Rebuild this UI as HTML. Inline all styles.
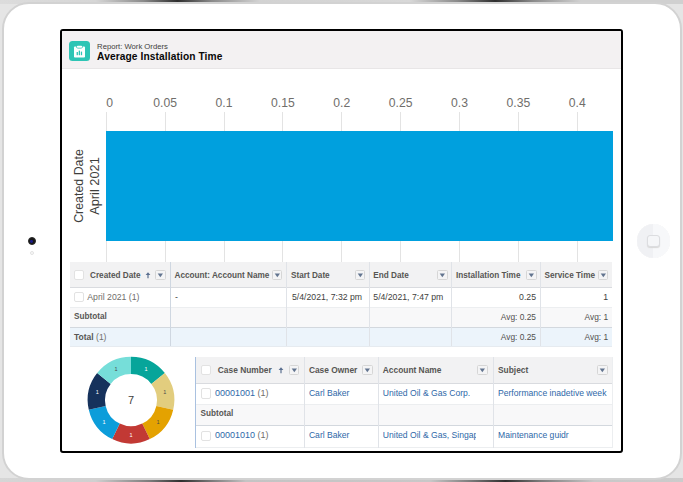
<!DOCTYPE html>
<html><head><meta charset="utf-8">
<style>
*{box-sizing:border-box;margin:0;padding:0}
html,body{width:683px;height:482px;overflow:hidden;background:#e5e5e5;font-family:"Liberation Sans",sans-serif}
.abs{position:absolute}
#topstrip{left:0;top:0;width:683px;height:4px;background:linear-gradient(90deg,#dcdcdc 0%,#d6d6d6 14%,#8a8a8a 21%,#2e2e2e 26%,#8a8a8a 31%,#d2d2d2 38%,#d8d8d8 60%,#8a8a8a 67%,#2e2e2e 72.5%,#8a8a8a 78%,#d0d0d0 85%,#d0d0d0 100%)}
#botstrip{left:0;top:478px;width:683px;height:4px;background:linear-gradient(90deg,#d6d6d6 0%,#d0d0d0 14%,#7a7a7a 22%,#2e2e2e 26.5%,#7a7a7a 31%,#c4c4c4 36%,#c8c8c8 63%,#7a7a7a 69%,#2e2e2e 74%,#7a7a7a 79%,#c8c8c8 87%,#cccccc 100%)}
#tablet{left:1.8px;top:1.5px;width:680px;height:478px;background:#fff;border-radius:27px;border:2px solid #d2d2d2}
#screen{left:59.5px;top:29px;width:563.5px;height:423.5px;border:2px solid #000;border-radius:3px;background:#fff;overflow:hidden}
#hdr{left:0;top:0;width:100%;height:38px;background:#f3f2f2;border-bottom:1px solid #e6e4e4}
.t{position:absolute;white-space:nowrap;line-height:1}
</style></head>
<body>
<div id="topstrip" class="abs"></div>
<div id="botstrip" class="abs"></div>
<div id="tablet" class="abs"></div>
<!-- camera -->
<div class="abs" style="left:27.6px;top:237.2px;width:8.3px;height:8.3px;border-radius:50%;background:#161616;border:1px solid #2a2a2a"></div>
<div class="abs" style="left:30.4px;top:240px;width:2.8px;height:2.8px;border-radius:50%;background:#1c1c8a"></div>
<div class="abs" style="left:29.6px;top:250.6px;width:4.3px;height:4.3px;border-radius:50%;background:#fafafa;border:1px solid #e2e2e2"></div>
<!-- home button -->
<div class="abs" style="left:636.6px;top:224.2px;width:33.4px;height:33.4px;border-radius:50%;background:linear-gradient(90deg,#f0f1f4 50%,#f7f8fa 50%);box-shadow:0 0 0.5px #e0e0e0"></div>
<div class="abs" style="left:647.2px;top:235px;width:12.8px;height:12.4px;border-radius:3px;background:#f5f6f8;border:1px solid #dcdde0;box-shadow:0 1px 1px #d8d8d8"></div>


<div id="screen" class="abs"><div class="abs" style="left:-61.5px;top:-31px;width:683px;height:482px">
<div class="abs" style="left:61.5px;top:31px;width:560px;height:37.6px;background:#f3f1f2;border-bottom:1px solid #e8e6e7"></div>
<div class="abs" style="left:69.3px;top:40.8px;width:20.6px;height:20.6px;border-radius:3.5px;background:#2ec5b5"></div>
<svg class="abs" style="left:69.3px;top:40.8px" width="21" height="21" viewBox="0 0 21 21">
<rect x="5" y="5.6" width="11" height="10.9" rx="0.9" fill="#fff"/>
<rect x="7.2" y="4.1" width="6.6" height="3.3" rx="1.6" fill="#2ec5b5"/>
<rect x="7.8" y="4.7" width="5.4" height="2.1" rx="1" fill="#fff"/>
<rect x="7.6" y="11" width="1.3" height="3.2" fill="#2ec5b5"/>
<rect x="9.7" y="9.6" width="1.3" height="4.6" fill="#2ec5b5"/>
<rect x="11.8" y="10.6" width="1.3" height="3.6" fill="#2ec5b5"/>
</svg>
<div class="t" style="left:97.1px;top:42.7px;font-size:7.7px;color:#3e3e3c">Report: Work Orders</div>
<div class="t" style="left:97.1px;top:51.6px;font-size:10.2px;letter-spacing:0.1px;font-weight:bold;color:#080707">Average Installation Time</div>
<div class="abs" style="left:105.80px;top:112px;width:1px;height:150px;background:#e3e3e3"></div>
<div class="t" style="left:106.30px;top:96.6px;font-size:12.2px;color:#706e6b">0</div>
<div class="abs" style="left:164.68px;top:112px;width:1px;height:150px;background:#e3e3e3"></div>
<div class="t" style="left:125.18px;width:80px;text-align:center;top:96.6px;font-size:12.2px;color:#706e6b">0.05</div>
<div class="abs" style="left:223.55px;top:112px;width:1px;height:150px;background:#e3e3e3"></div>
<div class="t" style="left:184.05px;width:80px;text-align:center;top:96.6px;font-size:12.2px;color:#706e6b">0.1</div>
<div class="abs" style="left:282.43px;top:112px;width:1px;height:150px;background:#e3e3e3"></div>
<div class="t" style="left:242.93px;width:80px;text-align:center;top:96.6px;font-size:12.2px;color:#706e6b">0.15</div>
<div class="abs" style="left:341.30px;top:112px;width:1px;height:150px;background:#e3e3e3"></div>
<div class="t" style="left:301.80px;width:80px;text-align:center;top:96.6px;font-size:12.2px;color:#706e6b">0.2</div>
<div class="abs" style="left:400.18px;top:112px;width:1px;height:150px;background:#e3e3e3"></div>
<div class="t" style="left:360.68px;width:80px;text-align:center;top:96.6px;font-size:12.2px;color:#706e6b">0.25</div>
<div class="abs" style="left:459.05px;top:112px;width:1px;height:150px;background:#e3e3e3"></div>
<div class="t" style="left:419.55px;width:80px;text-align:center;top:96.6px;font-size:12.2px;color:#706e6b">0.3</div>
<div class="abs" style="left:517.92px;top:112px;width:1px;height:150px;background:#e3e3e3"></div>
<div class="t" style="left:478.42px;width:80px;text-align:center;top:96.6px;font-size:12.2px;color:#706e6b">0.35</div>
<div class="abs" style="left:576.80px;top:112px;width:1px;height:150px;background:#e3e3e3"></div>
<div class="t" style="left:537.30px;width:80px;text-align:center;top:96.6px;font-size:12.2px;color:#706e6b">0.4</div>
<div class="abs" style="left:106px;top:131px;width:507px;height:110.2px;background:#00a0de"></div>
<div class="t" style="left:79.2px;top:186px;transform:translate(-50%,-50%) rotate(-90deg);font-size:12.4px;color:#3e3e3c">Created Date</div>
<div class="t" style="left:95px;top:186px;transform:translate(-50%,-50%) rotate(-90deg);font-size:12.8px;color:#3e3e3c">April 2021</div>
<div class="abs" style="left:70px;top:262px;width:542.4px;height:25px;background:#f2f2f3"></div>
<div class="abs" style="left:70px;top:287px;width:542.4px;height:20.30000000000001px;background:#fff"></div>
<div class="abs" style="left:70px;top:307.3px;width:542.4px;height:19.899999999999977px;background:#f8f8f9"></div>
<div class="abs" style="left:70px;top:327.2px;width:542.4px;height:18.400000000000034px;background:#ecf4fb"></div>
<div class="abs" style="left:70px;top:286.5px;width:542.4px;height:1.1px;background:#d9dbdf"></div>
<div class="abs" style="left:70px;top:306.8px;width:542.4px;height:1px;background:#eceef0"></div>
<div class="abs" style="left:70px;top:326.5px;width:542.4px;height:1.4px;background:#d3d8de"></div>
<div class="abs" style="left:70px;top:346px;width:542.4px;height:1px;background:#e6ebf0"></div>
<div class="abs" style="left:169.5px;top:262px;width:1.5px;height:83.60000000000002px;background:#cfd7e1"></div>
<div class="abs" style="left:285.7px;top:262px;width:1px;height:83.60000000000002px;background:#e0e3e8"></div>
<div class="abs" style="left:369.2px;top:262px;width:1px;height:83.60000000000002px;background:#e0e3e8"></div>
<div class="abs" style="left:450.9px;top:262px;width:1px;height:83.60000000000002px;background:#e0e3e8"></div>
<div class="abs" style="left:539.5px;top:262px;width:1px;height:83.60000000000002px;background:#e0e3e8"></div>
<div class="abs" style="left:74.3px;top:270.4px;width:10px;height:10px;border:1px solid #e2e2e2;border-radius:2px;background:#fff"></div>
<div class="t" style="left:90px;top:272.2px;font-size:8.2px;font-weight:bold;color:#575654;">Created Date</div>
<svg class="abs" style="left:145px;top:272px" width="6" height="7" viewBox="0 0 6 7"><path d="M3 0.3 L5.4 2.9 H3.6 V6.3 H2.4 V2.9 H0.6 Z" fill="#5a6f90"/></svg>
<div class="abs" style="left:155.2px;top:270px;width:10.6px;height:10.4px;border:1px solid #d6d6d6;border-radius:1.5px;background:#f4f4f5"></div>
<svg class="abs" style="left:155.2px;top:270px" width="11" height="11" viewBox="0 0 11 11"><path d="M2.7 3.5 H8 L5.35 7.2 Z" fill="#62748f"/></svg>
<div class="t" style="left:174.5px;top:272.2px;font-size:8.2px;font-weight:bold;color:#575654;">Account: Account Name</div>
<div class="abs" style="left:271.8px;top:270px;width:10.6px;height:10.4px;border:1px solid #d6d6d6;border-radius:1.5px;background:#f4f4f5"></div>
<svg class="abs" style="left:271.8px;top:270px" width="11" height="11" viewBox="0 0 11 11"><path d="M2.7 3.5 H8 L5.35 7.2 Z" fill="#62748f"/></svg>
<div class="t" style="left:291px;top:272.2px;font-size:8.2px;font-weight:bold;color:#575654;">Start Date</div>
<div class="abs" style="left:354.7px;top:270px;width:10.6px;height:10.4px;border:1px solid #d6d6d6;border-radius:1.5px;background:#f4f4f5"></div>
<svg class="abs" style="left:354.7px;top:270px" width="11" height="11" viewBox="0 0 11 11"><path d="M2.7 3.5 H8 L5.35 7.2 Z" fill="#62748f"/></svg>
<div class="t" style="left:373.3px;top:272.2px;font-size:8.2px;font-weight:bold;color:#575654;">End Date</div>
<div class="abs" style="left:437px;top:270px;width:10.6px;height:10.4px;border:1px solid #d6d6d6;border-radius:1.5px;background:#f4f4f5"></div>
<svg class="abs" style="left:437px;top:270px" width="11" height="11" viewBox="0 0 11 11"><path d="M2.7 3.5 H8 L5.35 7.2 Z" fill="#62748f"/></svg>
<div class="t" style="left:456px;top:272.2px;font-size:8.2px;font-weight:bold;color:#575654;">Installation Time</div>
<div class="abs" style="left:526px;top:270px;width:10.6px;height:10.4px;border:1px solid #d6d6d6;border-radius:1.5px;background:#f4f4f5"></div>
<svg class="abs" style="left:526px;top:270px" width="11" height="11" viewBox="0 0 11 11"><path d="M2.7 3.5 H8 L5.35 7.2 Z" fill="#62748f"/></svg>
<div class="t" style="left:544.6px;top:272.2px;font-size:8.2px;font-weight:bold;color:#575654;">Service Time</div>
<div class="abs" style="left:597.8px;top:270px;width:10.6px;height:10.4px;border:1px solid #d6d6d6;border-radius:1.5px;background:#f4f4f5"></div>
<svg class="abs" style="left:597.8px;top:270px" width="11" height="11" viewBox="0 0 11 11"><path d="M2.7 3.5 H8 L5.35 7.2 Z" fill="#62748f"/></svg>
<div class="abs" style="left:74.3px;top:292.4px;width:9.6px;height:9.6px;border:1px solid #e2e2e2;border-radius:2px;background:#fff"></div>
<div class="t" style="left:87.3px;top:293.3px;font-size:8.7px;font-weight:normal;color:#706e6b;">April 2021 (1)</div>
<div class="t" style="left:175px;top:293.3px;font-size:8.7px;font-weight:normal;color:#3e3e3c;">-</div>
<div class="t" style="left:292px;top:293.3px;font-size:8.7px;font-weight:normal;color:#3e3e3c;">5/4/2021, 7:32 pm</div>
<div class="t" style="left:373.3px;top:293.3px;font-size:8.7px;font-weight:normal;color:#3e3e3c;">5/4/2021, 7:47 pm</div>
<div class="t" style="left:456px;width:80px;text-align:right;top:293.3px;font-size:8.7px;color:#3e3e3c">0.25</div>
<div class="t" style="left:528px;width:80.2px;text-align:right;top:293.3px;font-size:8.7px;color:#3e3e3c">1</div>
<div class="t" style="left:74px;top:313.4px;font-size:8.2px;font-weight:bold;color:#575654;">Subtotal</div>
<div class="t" style="left:456px;width:80px;text-align:right;top:313.2px;font-size:8.4px;color:#514f4d">Avg: 0.25</div>
<div class="t" style="left:528px;width:80.2px;text-align:right;top:313.2px;font-size:8.4px;color:#514f4d">Avg: 1</div>
<div class="t" style="left:74px;top:332.5px;font-size:8.5px;color:#575654"><b>Total</b> <span style="color:#706e6b">(1)</span></div>
<div class="t" style="left:456px;width:80px;text-align:right;top:332.5px;font-size:8.4px;color:#514f4d">Avg: 0.25</div>
<div class="t" style="left:528px;width:80.2px;text-align:right;top:332.5px;font-size:8.4px;color:#514f4d">Avg: 1</div>
<svg class="abs" style="left:0;top:0" width="683" height="482" viewBox="0 0 683 482"><path d="M131.00 356.80 A43.3 43.3 0 0 1 164.85 373.10 L151.33 383.89 A26 26 0 0 0 131.00 374.10 Z" fill="#06a59a"/><text x="146.03" y="370.88" font-size="5.5" text-anchor="middle" fill="#fff" font-family="Liberation Sans">1</text><path d="M164.85 373.10 A43.3 43.3 0 0 1 173.21 409.74 L156.35 405.89 A26 26 0 0 0 151.33 383.89 Z" fill="#e2cd7e"/><text x="164.78" y="394.39" font-size="5.5" text-anchor="middle" fill="#4a4a4a" font-family="Liberation Sans">1</text><path d="M173.21 409.74 A43.3 43.3 0 0 1 149.79 439.11 L142.28 423.53 A26 26 0 0 0 156.35 405.89 Z" fill="#e4a201"/><text x="158.09" y="423.70" font-size="5.5" text-anchor="middle" fill="#4a4a4a" font-family="Liberation Sans">1</text><path d="M149.79 439.11 A43.3 43.3 0 0 1 112.21 439.11 L119.72 423.53 A26 26 0 0 0 142.28 423.53 Z" fill="#c23934"/><text x="131.00" y="436.75" font-size="5.5" text-anchor="middle" fill="#fff" font-family="Liberation Sans">1</text><path d="M112.21 439.11 A43.3 43.3 0 0 1 88.79 409.74 L105.65 405.89 A26 26 0 0 0 119.72 423.53 Z" fill="#0c9dda"/><text x="103.91" y="423.70" font-size="5.5" text-anchor="middle" fill="#fff" font-family="Liberation Sans">1</text><path d="M88.79 409.74 A43.3 43.3 0 0 1 97.15 373.10 L110.67 383.89 A26 26 0 0 0 105.65 405.89 Z" fill="#16325c"/><text x="97.22" y="394.39" font-size="5.5" text-anchor="middle" fill="#fff" font-family="Liberation Sans">1</text><path d="M97.15 373.10 A43.3 43.3 0 0 1 131.00 356.80 L131.00 374.10 A26 26 0 0 0 110.67 383.89 Z" fill="#76ded9"/><text x="115.97" y="370.88" font-size="5.5" text-anchor="middle" fill="#4a4a4a" font-family="Liberation Sans">1</text><text x="131" y="404.1" font-size="11" text-anchor="middle" fill="#3e3e3c" font-family="Liberation Sans">7</text></svg>
<div class="abs" style="left:195.5px;top:357.2px;width:416.9px;height:25.80000000000001px;background:#f2f2f3"></div>
<div class="abs" style="left:195.5px;top:383px;width:416.9px;height:21.399999999999977px;background:#fff"></div>
<div class="abs" style="left:195.5px;top:404.4px;width:416.9px;height:20.80000000000001px;background:#f8f8f9"></div>
<div class="abs" style="left:195.5px;top:425.2px;width:416.9px;height:22.80000000000001px;background:#fff"></div>
<div class="abs" style="left:195.5px;top:382.5px;width:416.9px;height:1.1px;background:#d9dbdf"></div>
<div class="abs" style="left:195.5px;top:403.9px;width:416.9px;height:1px;background:#eceef0"></div>
<div class="abs" style="left:195.5px;top:424.5px;width:416.9px;height:1.4px;background:#d3d8de"></div>
<div class="abs" style="left:195.5px;top:446.8px;width:416.9px;height:1px;background:#eceef0"></div>
<div class="abs" style="left:194.8px;top:357.2px;width:1.4px;height:90.80000000000001px;background:#a9c1e0"></div>
<div class="abs" style="left:303.7px;top:357.2px;width:1px;height:90.80000000000001px;background:#e0e3e8"></div>
<div class="abs" style="left:377.5px;top:357.2px;width:1px;height:90.80000000000001px;background:#e0e3e8"></div>
<div class="abs" style="left:492.9px;top:357.2px;width:1px;height:90.80000000000001px;background:#e0e3e8"></div>
<div class="abs" style="left:611.9px;top:357.2px;width:1px;height:90.80000000000001px;background:#eceef0"></div>
<div class="abs" style="left:200.6px;top:365px;width:10px;height:10px;border:1px solid #e2e2e2;border-radius:2px;background:#fff"></div>
<div class="t" style="left:217.8px;top:365.8px;font-size:8.4px;font-weight:bold;color:#575654;">Case Number</div>
<svg class="abs" style="left:277.5px;top:367px" width="6" height="7" viewBox="0 0 6 7"><path d="M3 0.3 L5.4 2.9 H3.6 V6.3 H2.4 V2.9 H0.6 Z" fill="#5a6f90"/></svg>
<div class="abs" style="left:288.8px;top:365px;width:10.6px;height:10.4px;border:1px solid #d6d6d6;border-radius:1.5px;background:#f4f4f5"></div>
<svg class="abs" style="left:288.8px;top:365px" width="11" height="11" viewBox="0 0 11 11"><path d="M2.7 3.5 H8 L5.35 7.2 Z" fill="#62748f"/></svg>
<div class="t" style="left:308.9px;top:365.8px;font-size:8.4px;font-weight:bold;color:#575654;">Case Owner</div>
<div class="abs" style="left:362px;top:365px;width:10.6px;height:10.4px;border:1px solid #d6d6d6;border-radius:1.5px;background:#f4f4f5"></div>
<svg class="abs" style="left:362px;top:365px" width="11" height="11" viewBox="0 0 11 11"><path d="M2.7 3.5 H8 L5.35 7.2 Z" fill="#62748f"/></svg>
<div class="t" style="left:382.8px;top:365.8px;font-size:8.4px;font-weight:bold;color:#575654;">Account Name</div>
<div class="abs" style="left:477px;top:365px;width:10.6px;height:10.4px;border:1px solid #d6d6d6;border-radius:1.5px;background:#f4f4f5"></div>
<svg class="abs" style="left:477px;top:365px" width="11" height="11" viewBox="0 0 11 11"><path d="M2.7 3.5 H8 L5.35 7.2 Z" fill="#62748f"/></svg>
<div class="t" style="left:498px;top:365.8px;font-size:8.4px;font-weight:bold;color:#575654;">Subject</div>
<div class="abs" style="left:597px;top:365px;width:10.6px;height:10.4px;border:1px solid #d6d6d6;border-radius:1.5px;background:#f4f4f5"></div>
<svg class="abs" style="left:597px;top:365px" width="11" height="11" viewBox="0 0 11 11"><path d="M2.7 3.5 H8 L5.35 7.2 Z" fill="#62748f"/></svg>
<div class="abs" style="left:200.6px;top:388.4px;width:10.2px;height:10.2px;border:1px solid #e2e2e2;border-radius:2px;background:#fff"></div>
<div class="t" style="left:214.9px;top:389px;font-size:9px;color:#2e68a8">00001001 <span style="color:#706e6b">(1)</span></div>
<div class="t" style="left:308.9px;top:389px;font-size:8.6px;font-weight:normal;color:#2e68a8;">Carl Baker</div>
<div class="t" style="left:382.8px;top:389px;font-size:8.6px;font-weight:normal;color:#2e68a8;">United Oil &amp; Gas Corp.</div>
<div class="t" style="left:498px;top:389px;font-size:8.6px;font-weight:normal;color:#2e68a8;">Performance inadetive week</div>
<div class="t" style="left:200.5px;top:410.2px;font-size:8.2px;font-weight:bold;color:#575654;">Subtotal</div>
<div class="abs" style="left:200.6px;top:430.6px;width:10.2px;height:10.2px;border:1px solid #e2e2e2;border-radius:2px;background:#fff"></div>
<div class="t" style="left:214.9px;top:431.2px;font-size:9px;color:#2e68a8">00001010 <span style="color:#706e6b">(1)</span></div>
<div class="t" style="left:308.9px;top:431.2px;font-size:8.6px;font-weight:normal;color:#2e68a8;">Carl Baker</div>
<div class="t" style="left:382.8px;top:431.2px;font-size:8.6px;color:#2e68a8;width:93px;overflow:hidden">United Oil &amp; Gas, Singapore</div>
<div class="t" style="left:498px;top:431.2px;font-size:8.6px;font-weight:normal;color:#2e68a8;">Maintenance guidr</div>
</div></div>
</body></html>
